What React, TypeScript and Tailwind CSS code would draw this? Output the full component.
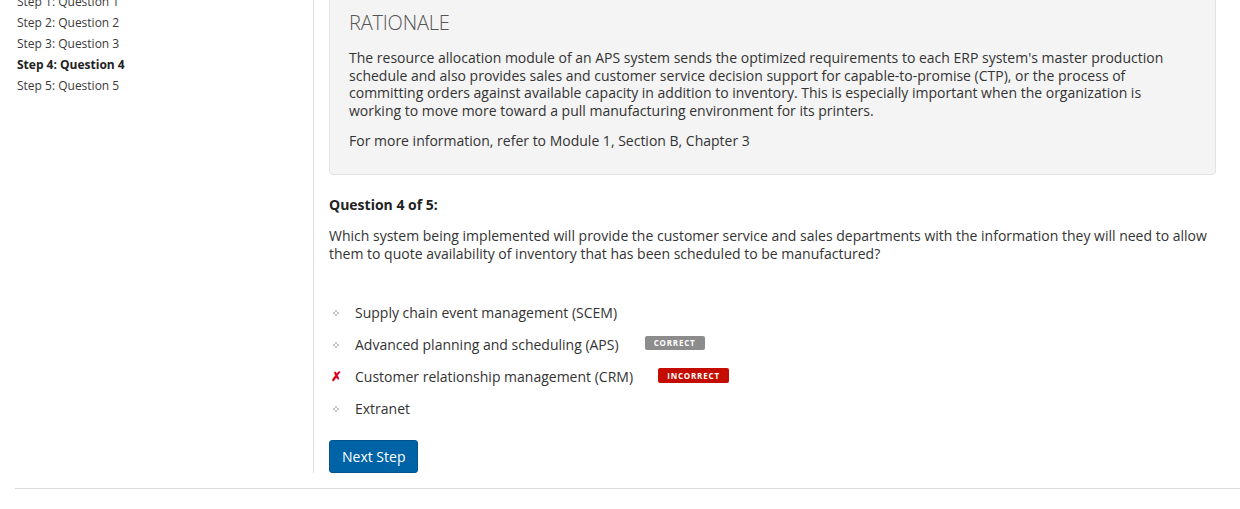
import React from "react";

const steps = [
  { label: "Step 1: Question 1", active: false },
  { label: "Step 2: Question 2", active: false },
  { label: "Step 3: Question 3", active: false },
  { label: "Step 4: Question 4", active: true },
  { label: "Step 5: Question 5", active: false },
];

function Bullet() {
  return (
    <svg width="6" height="6" viewBox="0 0 6 6" className="block">
      <rect x="2" y="0" width="2" height="2" fill="#c4c4c4" />
      <rect x="0" y="2" width="2" height="2" fill="#c4c4c4" />
      <rect x="4" y="2" width="2" height="2" fill="#c4c4c4" />
      <rect x="2" y="4" width="2" height="2" fill="#c4c4c4" />
    </svg>
  );
}

function Cross() {
  return <span className="text-[13px] leading-none text-[#e0001b] font-bold">✗</span>;
}

const options = [
  { text: "Supply chain event management (SCEM)", mark: "bullet", badge: null },
  { text: "Advanced planning and scheduling (APS)", mark: "bullet", badge: "correct" },
  { text: "Customer relationship management (CRM)", mark: "cross", badge: "incorrect" },
  { text: "Extranet", mark: "bullet", badge: null },
];

export default function App() {
  return (
    <div className="bg-white w-[1240px] h-[509px] overflow-hidden text-[#333] font-['Open_Sans',sans-serif]">
      <div className="flex -mt-[11px]">
        <aside className="w-[314px] shrink-0 border-r border-[#dcdcdc] pl-[17px] pt-[2px]">
          <ul className="text-[12px] leading-[21px]">
            {steps.map((s) => (
              <li key={s.label} className={s.active ? "font-bold text-[#222]" : "text-[#3a3a3a]"}>
                {s.label}
              </li>
            ))}
          </ul>
        </aside>
        <main className="flex-1 pl-[15px] pr-[24px]">
          <section className="bg-[#f4f4f4] border border-[#e3e3e3] rounded-[4px] pt-[19px] pb-[24px] px-[19px]">
            <h2 className="text-[20px] leading-[28px] font-light text-[#555] tracking-[-0.2px]">RATIONALE</h2>
            <p className="mt-[12px] text-[14px] leading-[17.6px] text-[#333]">
              The resource allocation module of an APS system sends the optimized requirements to each ERP system's master production schedule and also provides sales and customer service decision support for capable-to-promise (CTP), or the process of committing orders against available capacity in addition to inventory. This is especially important when the organization is working to move more toward a pull manufacturing environment for its printers.
            </p>
            <p className="mt-[13px] text-[14px] leading-[17.6px] text-[#333]">
              For more information, refer to Module 1, Section B, Chapter 3
            </p>
          </section>
          <h3 className="mt-[21px] text-[14px] leading-[18px] font-bold text-[#222]">Question 4 of 5:</h3>
          <p className="mt-[13px] text-[14px] leading-[18px] text-[#333]">
            Which system being implemented will provide the customer service and sales departments with the information they will need to allow them to quote availability of inventory that has been scheduled to be manufactured?
          </p>
          <ul className="mt-[34px]">
            {options.map((o) => (
              <li key={o.text} className="flex items-center h-[32px] text-[14px]">
                <span className="w-[26px] flex items-center pl-[2px]">
                  {o.mark === "bullet" ? (
                    <span className="pl-[2px]"><Bullet /></span>
                  ) : (
                    <Cross />
                  )}
                </span>
                <span className="text-[#333]">{o.text}</span>
                {o.badge === "correct" && (
                  <span className="ml-[26px] -mt-[3px] h-[14px] w-[60px] rounded-[2px] bg-[#8c8c8c] text-white text-[8px] font-bold tracking-[0.8px] flex items-center justify-center">
                    CORRECT
                  </span>
                )}
                {o.badge === "incorrect" && (
                  <span className="ml-[25px] -mt-[2px] h-[15px] w-[71px] rounded-[2px] bg-[#c40d00] text-white text-[8px] font-bold tracking-[0.8px] flex items-center justify-center">
                    INCORRECT
                  </span>
                )}
              </li>
            ))}
          </ul>
          <button className="mt-[15px] h-[33px] px-[12px] rounded-[3px] bg-[#0063a6] border border-[#00558f] text-white text-[14px] font-medium">
            Next Step
          </button>
        </main>
      </div>
      <div className="mt-[15px] ml-[15px] border-t border-[#dcdcdc]"></div>
    </div>
  );
}
